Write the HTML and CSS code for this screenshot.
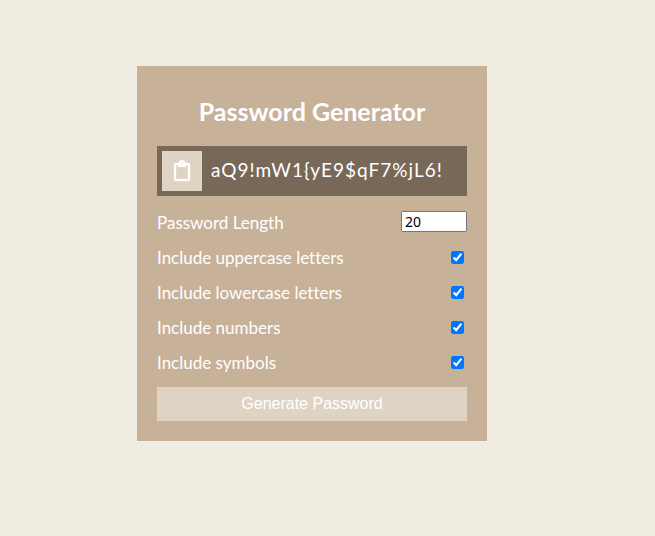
FILE: index.html
```html
<!DOCTYPE html>
<html lang="en">
<head>
<meta charset="utf-8">
<title>Password Generator</title>
<link rel="stylesheet" href="styles.css">
</head>
<body>
<main class="container">
  <h2 class="title">Password Generator</h2>
  <div class="result-container">
    <button class="copy" type="button" aria-label="Copy password">
      <svg class="icon" viewBox="0 0 16 22" aria-hidden="true">
        <path fill="currentColor" stroke="currentColor" stroke-width="0.3" fill-rule="evenodd" d="M2 3H5A3 3 0 0 1 11 3H14Q16 3 16 5V19Q16 21 14 21H2Q0 21 0 19V5Q0 3 2 3ZM2.500 5Q2 5 2 5.500V18.500Q2 19 2.500 19H13.500Q14 19 14 18.500V5.500Q14 5 13.500 5H12V6.500Q12 7 11.500 7H4.500Q4 7 4 6.500V5ZM8 2.200A.8 .8 0 0 0 8 3.800A.8 .8 0 0 0 8 2.200Z"/>
      </svg>
    </button>
    <output class="result">aQ9!mW1{yE9$qF7%jL6!</output>
  </div>
  <form class="settings">
    <div class="setting"><label for="length">Password Length</label><input class="length" type="number" id="length" min="4" max="20" value="20"></div>
    <div class="setting"><label for="uppercase">Include uppercase letters</label><input class="check" type="checkbox" id="uppercase" checked></div>
    <div class="setting"><label for="lowercase">Include lowercase letters</label><input class="check" type="checkbox" id="lowercase" checked></div>
    <div class="setting"><label for="numbers">Include numbers</label><input class="check" type="checkbox" id="numbers" checked></div>
    <div class="setting"><label for="symbols">Include symbols</label><input class="check" type="checkbox" id="symbols" checked></div>
  </form>
  <button class="generate" type="button">Generate Password</button>
</main>
</body>
</html>
```
FILE: styles.css
```css
* { box-sizing: border-box; }
body {
  min-height: 100vh;
  margin: 0;
  padding: 10px 41px 39px 10px;
  display: flex;
  align-items: center;
  justify-content: center;
  background: #f0ece1;
  color: #fff;
  font-family: Muli, Lato, sans-serif;
  font-size: 17px;
  font-variant-ligatures: none;
}
.container {
  width: 100%;
  max-width: 350px;
  padding: 20px;
  background: #c8b199;
}
.title {
  margin: 10px 0 20px;
  font-size: 25px;
  line-height: 30px;
  text-align: center;
}
.result-container {
  display: flex;
  align-items: center;
  gap: 9px;
  height: 50px;
  padding: 5px;
  background: #776858;
}
.copy {
  display: grid;
  place-items: center;
  flex: none;
  width: 40px;
  height: 40px;
  padding: 0;
  border: 0;
  background: #dfd3c3;
  color: #fff;
}
.icon { width: 16px; height: 22px; overflow: visible; }
.result {
  padding-bottom: 2px;
  font-size: 19px;
  line-height: 24px;
  letter-spacing: 1px;
}
.settings { margin: 15px 0; }
.setting {
  display: flex;
  align-items: center;
  justify-content: space-between;
  min-height: 20px;
  margin: 15px 0;
  line-height: 18px;
}
.setting label { padding-top: 2px; }
.length { width: 66px; height: 21px; font: 14px "Noto Sans", sans-serif; }
.check { width: 13px; height: 13px; margin: 3px; }
.generate {
  display: block;
  width: 100%;
  height: 34px;
  border: 0;
  background: #dfd3c3;
  color: #fff;
  font: 16px "Liberation Sans", sans-serif;
}
```
